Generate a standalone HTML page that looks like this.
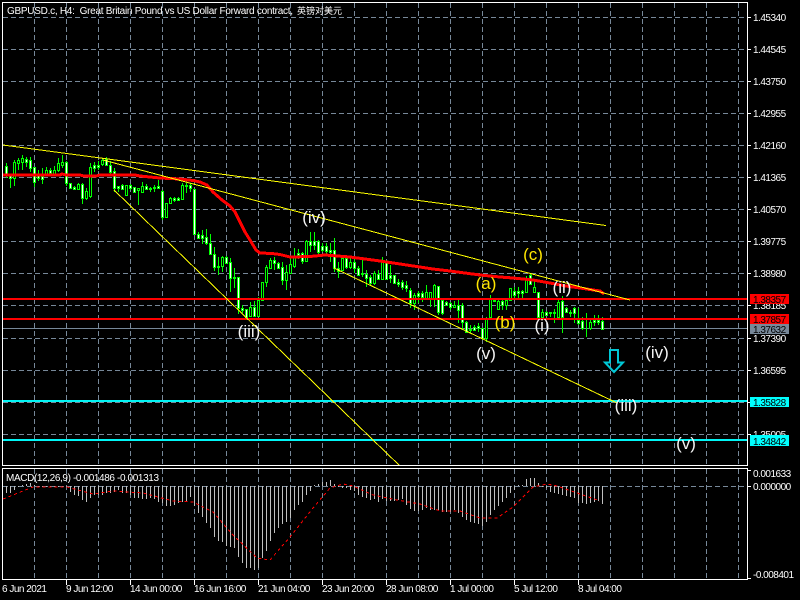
<!DOCTYPE html>
<html><head><meta charset="utf-8"><title>GBPUSD.c H4</title>
<style>html,body{margin:0;padding:0;background:#000;width:800px;height:600px;overflow:hidden}svg{display:block}
text{font-family:"Liberation Sans","Noto Sans CJK SC",sans-serif;fill:#fff;font-size:10px}
.a text{letter-spacing:-.5px}.k text{fill:#000}
.w text{font-size:17px;text-anchor:middle;fill:#f4f4f4}.y text{fill:#ffe600}
</style></head><body>
<svg width="800" height="600" viewBox="0 0 800 600" xmlns="http://www.w3.org/2000/svg">
<rect width="800" height="600" fill="#000"/>
<!-- grid -->
<path fill="none" stroke="#778899" stroke-dasharray="5 3" d="M34.5 3V465M66.5 3V465M98.5 3V465M130.5 3V465M162.5 3V465M194.5 3V465M226.5 3V465M258.5 3V465M290.5 3V465M322.5 3V465M354.5 3V465M386.5 3V465M418.5 3V465M450.5 3V465M482.5 3V465M514.5 3V465M546.5 3V465M578.5 3V465M610.5 3V465M642.5 3V465M674.5 3V465M706.5 3V465M738.5 3V465
M34.5 469V579M66.5 469V579M98.5 469V579M130.5 469V579M162.5 469V579M194.5 469V579M226.5 469V579M258.5 469V579M290.5 469V579M322.5 469V579M354.5 469V579M386.5 469V579M418.5 469V579M450.5 469V579M482.5 469V579M514.5 469V579M546.5 469V579M578.5 469V579M610.5 469V579M642.5 469V579M674.5 469V579M706.5 469V579M738.5 469V579
M3 17.5H747M3 49.5H747M3 81.5H747M3 113.5H747M3 145.5H747M3 177.5H747M3 209.5H747M3 241.5H747M3 273.5H747M3 305.5H747M3 338.5H747M3 370.5H747M3 402.5H747M3 434.5H747M3 486.5H747"/>
<!-- grey price line -->
<path stroke="#778899" d="M3 328.5H747"/>
<!-- candle wicks -->
<path fill="none" stroke="#00ff00" d="M6.5 163V178M10.5 175V188M14.5 160V186M18.5 158V170M22.5 155V170M26.5 157V167M30.5 157V172M34.5 167V187M38.5 170V181M42.5 168V184M46.5 167V176M50.5 168V175M54.5 166V176M58.5 158V172M62.5 155V168M66.5 161V186M70.5 183V189M74.5 186V190M78.5 183V190M82.5 183V204M86.5 188V200M90.5 163V198M94.5 162V172M98.5 161V170M102.5 158V166M106.5 157V166M110.5 161V175M114.5 168V192M118.5 186V192M122.5 184V190M126.5 185V195M130.5 184V190M134.5 187V193M138.5 188V205M142.5 182V193M146.5 184V190M150.5 187V192M154.5 185V192M158.5 180V189M162.5 190V220M166.5 203V217M170.5 197V204M174.5 197V202M178.5 197V201M182.5 183V199M186.5 183V193M190.5 183V192M194.5 189V234M198.5 232V239M202.5 230V244M206.5 229V245M210.5 234V254M214.5 247V271M218.5 257V275M222.5 256V272M226.5 256V263M230.5 258V292M234.5 268V288M238.5 277V314M242.5 305V313M246.5 309V318M250.5 302V316M254.5 301V317M258.5 297V316M262.5 282V300M266.5 265V287M270.5 258V268M274.5 257V270M278.5 262V269M282.5 262V285M286.5 265V290M290.5 258V274M294.5 248V268M298.5 249V259M302.5 252V264M306.5 240V262M310.5 232V252M314.5 232V250M318.5 240V254M322.5 243V252M326.5 243V254M330.5 243V262M334.5 238V272M338.5 262V278M342.5 257V270M346.5 257V269M350.5 258V269M354.5 259V273M358.5 266V276M362.5 260V277M366.5 270V287M370.5 275V285M374.5 271V285M378.5 270V280M382.5 257V280M386.5 260V280M390.5 265V283M394.5 275V284M398.5 279V287M402.5 280V290M406.5 281V292M410.5 288V308M414.5 293V310M418.5 291V303M422.5 291V302M426.5 285V300M430.5 292V307M434.5 284V307M438.5 286V315M442.5 299V315M446.5 301V306M450.5 302V310M454.5 301V308M458.5 300V323M462.5 303V330M466.5 321V333M470.5 325V333M474.5 325V331M478.5 323V332M482.5 328V340M486.5 317V342M490.5 295V318M494.5 299V302M498.5 300V310M502.5 300V310M506.5 299V310M510.5 288V300M514.5 287V299M518.5 287V299M522.5 290V298M526.5 276V292M530.5 273V285M534.5 280V292M538.5 292V319M542.5 309V317M546.5 311V316M550.5 312V317M554.5 309V323M558.5 300V317M562.5 296V333M566.5 307V312M570.5 310V317M574.5 307V323M578.5 308V325M582.5 317V330M586.5 313V337M590.5 320V330M594.5 315V326M598.5 315V325M602.5 317V330"/>
<!-- white bodies -->
<path fill="#fff" stroke="#00ff00" d="M5.5 166.5h2v8h-2zM9.5 175.5h2v3h-2zM25.5 159.5h2v3h-2zM29.5 160.5h2v8h-2zM33.5 167.5h2v15h-2zM37.5 175.5h2v3h-2zM41.5 176.5h2v3h-2zM49.5 170.5h2v3h-2zM65.5 162.5h2v21h-2zM69.5 183.5h2v5h-2zM73.5 187.5h2v2h-2zM81.5 184.5h2v14h-2zM93.5 165.5h2v3h-2zM97.5 165.5h2v2h-2zM105.5 159.5h2v6h-2zM109.5 165.5h2v7h-2zM113.5 171.5h2v17h-2zM117.5 186.5h2v2h-2zM121.5 185.5h2v4h-2zM129.5 185.5h2v3h-2zM133.5 187.5h2v5h-2zM145.5 186.5h2v3h-2zM149.5 188.5h2v1h-2zM153.5 187.5h2v1h-2zM157.5 186.5h2v2h-2zM161.5 191.5h2v26h-2zM173.5 198.5h2v2h-2zM177.5 198.5h2v2h-2zM185.5 185.5h2v1h-2zM189.5 185.5h2v3h-2zM193.5 189.5h2v45h-2zM197.5 234.5h2v4h-2zM201.5 235.5h2v3h-2zM205.5 237.5h2v6h-2zM209.5 243.5h2v11h-2zM213.5 254.5h2v13h-2zM217.5 266.5h2v1h-2zM225.5 257.5h2v6h-2zM229.5 262.5h2v16h-2zM233.5 277.5h2v1h-2zM237.5 277.5h2v31h-2zM241.5 308.5h2v2h-2zM245.5 309.5h2v8h-2zM253.5 307.5h2v9h-2zM273.5 260.5h2v3h-2zM277.5 263.5h2v5h-2zM281.5 267.5h2v13h-2zM297.5 253.5h2v2h-2zM301.5 253.5h2v8h-2zM309.5 241.5h2v4h-2zM313.5 241.5h2v4h-2zM317.5 241.5h2v11h-2zM321.5 246.5h2v4h-2zM325.5 246.5h2v5h-2zM329.5 250.5h2v2h-2zM333.5 250.5h2v18h-2zM337.5 268.5h2v3h-2zM345.5 258.5h2v9h-2zM353.5 262.5h2v6h-2zM357.5 268.5h2v7h-2zM361.5 273.5h2v1h-2zM365.5 274.5h2v4h-2zM369.5 277.5h2v6h-2zM377.5 274.5h2v5h-2zM385.5 262.5h2v17h-2zM389.5 275.5h2v3h-2zM393.5 275.5h2v8h-2zM397.5 282.5h2v2h-2zM401.5 282.5h2v5h-2zM405.5 285.5h2v3h-2zM409.5 290.5h2v13h-2zM417.5 293.5h2v3h-2zM421.5 293.5h2v4h-2zM437.5 286.5h2v26h-2zM441.5 300.5h2v13h-2zM445.5 302.5h2v3h-2zM449.5 303.5h2v4h-2zM457.5 305.5h2v5h-2zM461.5 305.5h2v17h-2zM465.5 322.5h2v10h-2zM469.5 329.5h2v1h-2zM473.5 327.5h2v3h-2zM477.5 326.5h2v2h-2zM481.5 328.5h2v10h-2zM501.5 301.5h2v4h-2zM513.5 291.5h2v4h-2zM517.5 291.5h2v2h-2zM521.5 291.5h2v2h-2zM529.5 275.5h2v9h-2zM537.5 292.5h2v25h-2zM545.5 312.5h2v3h-2zM549.5 312.5h2v1h-2zM553.5 312.5h2v1h-2zM561.5 301.5h2v16h-2zM565.5 308.5h2v4h-2zM569.5 312.5h2v1h-2zM573.5 308.5h2v5h-2zM577.5 320.5h2v3h-2zM581.5 321.5h2v7h-2zM593.5 320.5h2v2h-2zM597.5 320.5h2v2h-2zM601.5 321.5h2v8h-2z"/>
<!-- black bodies -->
<path fill="#000" stroke="#00ff00" d="M13.5 162.5h2v16h-2zM17.5 160.5h2v3h-2zM21.5 158.5h2v4h-2zM45.5 170.5h2v5h-2zM53.5 170.5h2v5h-2zM57.5 163.5h2v7h-2zM61.5 162.5h2v3h-2zM77.5 184.5h2v5h-2zM85.5 191.5h2v7h-2zM89.5 167.5h2v29h-2zM101.5 160.5h2v4h-2zM125.5 185.5h2v10h-2zM137.5 188.5h2v2h-2zM141.5 186.5h2v6h-2zM165.5 203.5h2v14h-2zM169.5 198.5h2v5h-2zM181.5 185.5h2v14h-2zM221.5 257.5h2v9h-2zM249.5 307.5h2v9h-2zM257.5 300.5h2v16h-2zM261.5 282.5h2v18h-2zM265.5 267.5h2v15h-2zM269.5 260.5h2v8h-2zM285.5 272.5h2v8h-2zM289.5 264.5h2v9h-2zM293.5 257.5h2v9h-2zM305.5 241.5h2v20h-2zM341.5 258.5h2v12h-2zM349.5 262.5h2v5h-2zM373.5 273.5h2v10h-2zM381.5 262.5h2v17h-2zM413.5 295.5h2v8h-2zM425.5 292.5h2v6h-2zM429.5 292.5h2v6h-2zM433.5 285.5h2v13h-2zM453.5 305.5h2v2h-2zM485.5 319.5h2v19h-2zM489.5 299.5h2v18h-2zM497.5 301.5h2v8h-2zM505.5 300.5h2v5h-2zM509.5 288.5h2v12h-2zM525.5 280.5h2v12h-2zM533.5 287.5h2v5h-2zM541.5 312.5h2v5h-2zM557.5 302.5h2v15h-2zM589.5 322.5h2v6h-2z"/>
<path fill="none" stroke="#00ff00" d="M493.5 300.5h2v1h-2z"/>
<!-- MA -->
<polyline fill="none" stroke="#ff0000" stroke-width="3" shape-rendering="crispEdges" points="3,175 60,175 62,174 66,175 80,175 84,176 96,176 100,175 135,175 140,176 160,178 180,179 193,180.5 200,182 207,185 213,192 222,200 230,206 235,212 240,222 245,232 250,240 256,250 260,253 272,253.5 280,254.5 290,257 310,256.5 325,255 350,257 365,259 380,261 400,264 433,269 450,271 480,275 500,277 513,278 533,280 550,283 566,286 580,288 600,291 604,294"/>
<!-- horizontal levels -->
<rect x="3" y="298" width="744" height="2" fill="#ff0000"/>
<rect x="3" y="318" width="744" height="2" fill="#ff0000"/>
<rect x="3" y="400" width="744" height="2" fill="#00f5f5"/>
<rect x="3" y="439" width="744" height="2" fill="#00f5f5"/>
<!-- trend lines -->
<g fill="none" stroke="#ffff00" shape-rendering="crispEdges">
<path d="M3 145L606 225.500"/>
<path d="M103 160L630 300"/>
<path d="M114 190L400 466" />
<path d="M334 268L617 403"/>
</g>
<!-- arrow -->
<path d="M610 350H618V362.500H623L614 372L605 362.500H610Z" fill="none" stroke="#00c8d6" stroke-width="2"/>
<!-- wave labels -->
<g class="w">
<text x="249" y="337">(iii)</text>
<text x="314" y="223">(iv)</text>
<text x="486" y="359">(v)</text>
<text x="542" y="331">(i)</text>
<text x="562" y="293">(ii)</text>
<text x="657" y="358">(iv)</text>
<text x="626" y="411">(iii)</text>
<text x="686" y="449">(v)</text>
<g class="y">
<text x="486" y="289">(a)</text>
<text x="505" y="328">(b)</text>
<text x="533" y="260">(c)</text>
</g>
</g>
<!-- MACD -->
<path fill="none" stroke="#c0c0c0" d="M6.500 486V493M10.500 486V493M14.500 486V490M18.500 486V487M22.500 486V485M26.500 486V484M30.500 486V483M34.500 486V485M38.500 486V487M42.500 486V487M46.500 486V487M50.500 486V487M54.500 486V487M58.500 486V487M62.500 486V487M66.500 486V487M70.500 486V492M74.500 486V495M78.500 486V496M82.500 486V500M86.500 486V502M90.500 486V498M94.500 486V495M98.500 486V495M102.500 486V495M106.500 486V493M110.500 486V493M114.500 486V492M118.500 486V490M122.500 486V493M126.500 486V493M130.500 486V495M134.500 486V498M138.500 486V498M142.500 486V499M146.500 486V499M150.500 486V498M154.500 486V499M158.500 486V502M162.500 486V503M166.500 486V506M170.500 486V506M174.500 486V505M178.500 486V503M182.500 486V502M186.500 486V501M190.500 486V497M194.500 486V506M198.500 486V513M202.500 486V517M206.500 486V523M210.500 486V528M214.500 486V537M218.500 486V541M222.500 486V542M226.500 486V546M230.500 486V547M234.500 486V548M238.500 486V557M242.500 486V563M246.500 486V568M250.500 486V568M254.500 486V570M258.500 486V568M262.500 486V558M266.500 486V551M270.500 486V541M274.500 486V533M278.500 486V528M282.500 486V524M286.500 486V522M290.500 486V518M294.500 486V510M298.500 486V505M302.500 486V502M306.500 486V495M310.500 486V491M314.500 486V485M318.500 486V484M322.500 486V482M326.500 486V482M330.500 486V480M334.500 486V484M338.500 486V487M342.500 486V488M346.500 486V488M350.500 486V490M354.500 486V491M358.500 486V495M362.500 486V497M366.500 486V498M370.500 486V500M374.500 486V499M378.500 486V502M382.500 486V499M386.500 486V501M390.500 486V501M394.500 486V501M398.500 486V500M402.500 486V499M406.500 486V505M410.500 486V509M414.500 486V511M418.500 486V511M422.500 486V510M426.500 486V508M430.500 486V510M434.500 486V510M438.500 486V510M442.500 486V512M446.500 486V512M450.500 486V512M454.500 486V510M458.500 486V513M462.500 486V517M466.500 486V520M470.500 486V522M474.500 486V523M478.500 486V524M482.500 486V526M486.500 486V522M490.500 486V515M494.500 486V510M498.500 486V506M502.500 486V502M506.500 486V498M510.500 486V493M514.500 486V490M518.500 486V485M522.500 486V485M526.500 486V479M530.500 486V478M534.500 486V478M538.500 486V483M542.500 486V487M546.500 486V488M550.500 486V492M554.500 486V493M558.500 486V494M562.500 486V495M566.500 486V496M570.500 486V497M574.500 486V498M578.500 486V503M582.500 486V503M586.500 486V504M590.500 486V503M594.500 486V502M598.500 486V501M602.500 486V504"/>
<polyline fill="none" stroke="#ff0000" stroke-dasharray="3 3" shape-rendering="crispEdges" points="3,499 33,487 67,487 93,494 113,491 143,493 173,501 193,502 213,512 233,535 257,558 270,560 290,537 313,508 330,488 343,484 353,486 373,495 397,500 420,504 440,511 460,511 480,518 497,518 513,507 533,487 547,484 557,486 580,494 600,501"/>
<!-- frame and ticks -->
<path fill="none" stroke="#fff" d="M2.500 2.500H747.500V465.500H2.500ZM2.500 468.500H747.500V579.500H2.500Z
M747 17.500h4M747 49.500h4M747 81.500h4M747 113.500h4M747 145.500h4M747 177.500h4M747 209.500h4M747 241.500h4M747 273.500h4M747 305.500h4M747 338.500h4M747 370.500h4M747 402.500h4M747 434.500h4M747 470.500h4M747 486.500h4M747 578.500h4
M66.500 580v5M130.500 580v5M194.500 580v5M258.500 580v5M322.500 580v5M386.500 580v5M450.500 580v5M514.500 580v5M578.500 580v5"/>
<!-- title -->
<text x="7" y="14" textLength="286" lengthAdjust="spacing" xml:space="preserve">GBPUSD.c, H4:  Great Britain Pound vs US Dollar Forward contract,</text>
<text x="297" y="14" style="font-size:9px" textLength="45">英镑对美元</text>
<text x="6" y="481" textLength="153" lengthAdjust="spacing">MACD(12,26,9) -0.001486 -0.001313</text>
<!-- axis labels -->
<g class="a">
<text x="753" y="21">1.45340</text>
<text x="753" y="53">1.44545</text>
<text x="753" y="85">1.43750</text>
<text x="753" y="117">1.42955</text>
<text x="753" y="149">1.42160</text>
<text x="753" y="181">1.41365</text>
<text x="753" y="213">1.40570</text>
<text x="753" y="245">1.39775</text>
<text x="753" y="277">1.38980</text>
<text x="753" y="309">1.38185</text>
<text x="753" y="342">1.37390</text>
<text x="753" y="374">1.36595</text>
<text x="753" y="438">1.35005</text>
<text x="753" y="477">0.001633</text>
<text x="753" y="490">0.000000</text>
<text x="753" y="578">-0.008401</text>
<text x="2" y="592">6 Jun 2021</text>
<text x="66" y="592">9 Jun 12:00</text>
<text x="130" y="592">14 Jun 00:00</text>
<text x="194" y="592">16 Jun 16:00</text>
<text x="258" y="592">21 Jun 04:00</text>
<text x="322" y="592">23 Jun 20:00</text>
<text x="386" y="592">28 Jun 08:00</text>
<text x="450" y="592">1 Jul 00:00</text>
<text x="514" y="592">5 Jul 12:00</text>
<text x="578" y="592">8 Jul 04:00</text>
</g>
<!-- price tags -->
<rect x="750" y="294" width="39" height="10" fill="#ff0000"/>
<rect x="750" y="314" width="39" height="10" fill="#ff0000"/>
<rect x="750" y="324" width="39" height="10" fill="#778899"/>
<rect x="750" y="397" width="39" height="10" fill="#00ffff"/>
<rect x="750" y="435" width="39" height="11" fill="#00ffff"/>
<g class="a k">
<text x="753" y="303">1.38357</text>
<text x="753" y="323">1.37857</text>
<text x="753" y="333">1.37632</text>
<text x="753" y="406">1.35828</text>
<text x="753" y="445">1.34842</text>
</g>
</svg>
</body></html>
